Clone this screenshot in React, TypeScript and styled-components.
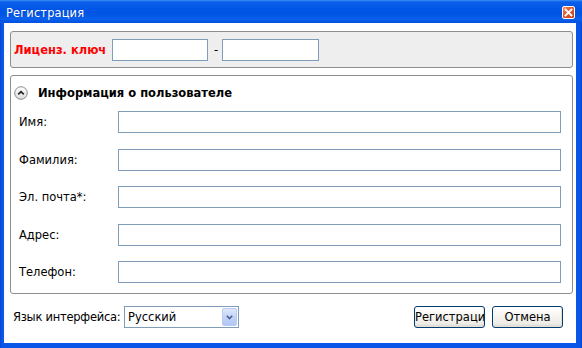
import React from 'react';
import styled, { createGlobalStyle } from 'styled-components';

const GlobalStyle = createGlobalStyle`
  html, body {
    margin: 0;
    padding: 0;
    background: #fff;
    overflow: hidden;
  }
  body {
    font-family: "DejaVu Sans", Tahoma, sans-serif;
    font-size: 11.5px;
    color: #000;
  }
`;

const Window = styled.div`
  width: 582px;
  height: 348px;
  display: flex;
  flex-direction: column;
  background: #0a54e6;
`;

const TitleBar = styled.div`
  height: 23px;
  flex: 0 0 auto;
  display: flex;
  align-items: flex-start;
  padding: 0 7px 0 6px;
  background: linear-gradient(
    to bottom,
    #3d8ff7 0px,
    #0a5fe9 2px,
    #0257e8 8px,
    #0054e3 14px,
    #0a60ee 19px,
    #0450dc 23px
  );
`;

const Title = styled.span`
  margin-top: 5px;
  line-height: 17px;
  font-size: 11.5px;
  color: #fff;
  text-shadow: 1px 0 0 rgba(0, 30, 120, 0.35);
  letter-spacing: 0.1px;
`;

const CloseButton = styled.div`
  margin-left: auto;
  margin-top: 6px;
  width: 13px;
  height: 13px;
  box-sizing: border-box;
  border: 1px solid #fff;
  border-radius: 2px;
  background: linear-gradient(135deg, #f08a64 0%, #e25a31 45%, #c8401c 100%);
  display: flex;
  align-items: center;
  justify-content: center;
`;

const Frame = styled.div`
  flex: 1 1 auto;
  display: flex;
  padding: 0 6px 5px 4px;
  background: linear-gradient(to right, #0a45d8 0px, #0a56e8 2px, #0a56e8 calc(100% - 2px), #0a40cc 100%);
`;

const Client = styled.div`
  flex: 1 1 auto;
  display: flex;
  flex-direction: column;
  background: #fff;
  padding: 8px 3px 0 6px;
`;

const LicensePanel = styled.div`
  height: 37px;
  box-sizing: border-box;
  display: flex;
  align-items: center;
  padding-left: 3px;
  border: 1px solid #8d8d8d;
  border-radius: 3px;
  background: #eeeeee;
`;

const LicenseLabel = styled.span`
  width: 98px;
  flex: 0 0 auto;
  color: #ff0000;
  font-weight: bold;
  font-size: 11.5px;
  white-space: nowrap;
`;

const TextBox = styled.div<{ w?: number }>`
  width: ${({ w }) => (w ? `${w}px` : '100%')};
  height: 22px;
  box-sizing: border-box;
  border: 1px solid #7f9db9;
  background: #fff;
`;

const Dash = styled.span`
  width: 14px;
  padding-left: 2px;
  box-sizing: border-box;
  text-align: center;
`;

const InfoPanel = styled.div`
  margin-top: 7px;
  height: 219px;
  box-sizing: border-box;
  border: 1px solid #8d8d8d;
  border-radius: 3px;
  padding: 9px 0 0 3px;
`;

const Header = styled.div`
  display: flex;
  align-items: center;
  gap: 10px;
  height: 16px;
`;

const HeaderTitle = styled.span`
  font-weight: bold;
  font-size: 11.5px;
`;

const FormGrid = styled.div`
  margin: 10px 0 0 5px;
  display: grid;
  grid-template-columns: 99px 443px;
  grid-auto-rows: 22px;
  row-gap: 15.5px;
  align-items: center;
`;

const FieldLabel = styled.span`
  white-space: nowrap;
`;

const BottomRow = styled.div`
  display: flex;
  align-items: center;
  padding: 12px 10px 0 3px;
`;

const LangLabel = styled.span`
  width: 111px;
  flex: 0 0 auto;
  white-space: nowrap;
  letter-spacing: -0.25px;
`;

const Select = styled.div`
  width: 115px;
  height: 22px;
  box-sizing: border-box;
  border: 1px solid #7f9db9;
  background: #fff;
  display: flex;
  align-items: center;
  padding: 1px 1px 1px 3px;
`;

const SelectText = styled.span`
  flex: 1 1 auto;
`;

const DropButton = styled.div`
  width: 15px;
  height: 18px;
  box-sizing: border-box;
  border: 1px solid #b9cbf3;
  border-radius: 2px;
  background: linear-gradient(to bottom, #dde8fd 0%, #c3d4fa 50%, #b2c6f5 100%);
  display: flex;
  align-items: center;
  justify-content: center;
`;

const Spacer = styled.div`
  flex: 1 1 auto;
`;

const Button = styled.button`
  width: 71px;
  height: 22px;
  box-sizing: border-box;
  padding: 0;
  margin: 0;
  border: 1px solid #003c74;
  border-radius: 3px;
  background: linear-gradient(to bottom, #ffffff 0%, #f7f6f2 40%, #ecebe6 85%, #d6d0c5 100%);
  box-shadow: inset -1px -1px 0 #e3e0d6;
  font-family: "DejaVu Sans", Tahoma, sans-serif;
  font-size: 11.5px;
  color: #000;
  white-space: nowrap;
  overflow: hidden;
  & + & {
    margin-left: 7px;
  }
`;

const CloseIcon = () => (
  <svg width="9" height="9" viewBox="0 0 9 9">
    <path d="M1.5 1.5 L7.5 7.5 M7.5 1.5 L1.5 7.5" stroke="#fff" strokeWidth="1.8" strokeLinecap="square" />
  </svg>
);

const CollapseIcon = () => (
  <svg width="14" height="14" viewBox="0 0 14 14">
    <defs>
      <linearGradient id="cg" x1="0" y1="0" x2="0" y2="1">
        <stop offset="0" stopColor="#ffffff" />
        <stop offset="1" stopColor="#dcdcdc" />
      </linearGradient>
    </defs>
    <circle cx="7" cy="7" r="6.3" fill="url(#cg)" stroke="#8a8a8a" strokeWidth="1" />
    <path d="M4.2 8.4 L7 5.6 L9.8 8.4" fill="none" stroke="#222" strokeWidth="1.6" />
  </svg>
);

const Chevron = () => (
  <svg width="7" height="5" viewBox="0 0 7 5">
    <path d="M0.8 0.8 L3.5 3.5 L6.2 0.8" fill="none" stroke="#4d6185" strokeWidth="1.6" />
  </svg>
);

const fields = ['Имя:', 'Фамилия:', 'Эл. почта*:', 'Адрес:', 'Телефон:'];

export default function App() {
  return (
    <>
      <GlobalStyle />
      <Window>
        <TitleBar>
          <Title>Регистрация</Title>
          <CloseButton>
            <CloseIcon />
          </CloseButton>
        </TitleBar>
        <Frame>
          <Client>
            <LicensePanel>
              <LicenseLabel>Лиценз. ключ</LicenseLabel>
              <TextBox w={96} />
              <Dash>-</Dash>
              <TextBox w={97} />
            </LicensePanel>
            <InfoPanel>
              <Header>
                <CollapseIcon />
                <HeaderTitle>Информация о пользователе</HeaderTitle>
              </Header>
              <FormGrid>
                {fields.map((f) => (
                  <React.Fragment key={f}>
                    <FieldLabel>{f}</FieldLabel>
                    <TextBox />
                  </React.Fragment>
                ))}
              </FormGrid>
            </InfoPanel>
            <BottomRow>
              <LangLabel>Язык интерфейса:</LangLabel>
              <Select>
                <SelectText>Русский</SelectText>
                <DropButton>
                  <Chevron />
                </DropButton>
              </Select>
              <Spacer />
              <Button>Регистраци</Button>
              <Button>Отмена</Button>
            </BottomRow>
          </Client>
        </Frame>
      </Window>
    </>
  );
}
